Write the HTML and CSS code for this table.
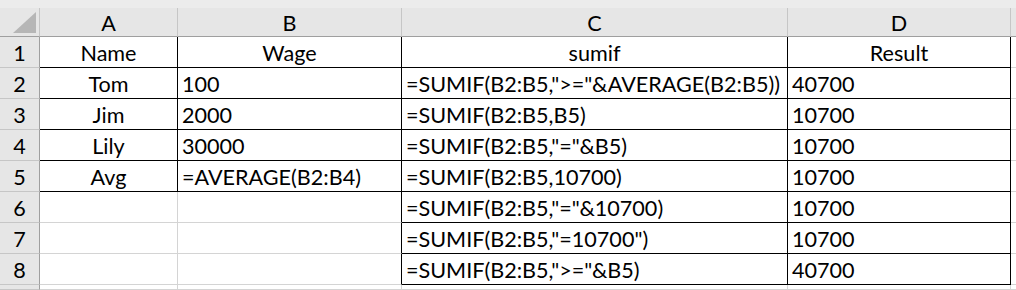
FILE: index.html
```html
<!DOCTYPE html>
<html>
<head>
<meta charset="utf-8">
<link rel="stylesheet" href="styles.css">
</head>
<body>
<div class="topstrip"></div>
<div class="sheet">
  <div class="corner"><span class="tri"></span></div>
  <div class="hd">A</div>
  <div class="hd">B</div>
  <div class="hd">C</div>
  <div class="hd">D</div>
  <div class="hd hd-e"></div>

  <div class="rh">1</div>
  <div class="c bk ctr">Name</div>
  <div class="c bk ctr">Wage</div>
  <div class="c bk ctr">sumif</div>
  <div class="c bk ctr">Result</div>
  <div class="c e"></div>

  <div class="rh">2</div>
  <div class="c bk ctr">Tom</div>
  <div class="c bk">100</div>
  <div class="c bk">=SUMIF(B2:B5,"&gt;="&amp;AVERAGE(B2:B5))</div>
  <div class="c bk">40700</div>
  <div class="c e"></div>

  <div class="rh">3</div>
  <div class="c bk ctr">Jim</div>
  <div class="c bk">2000</div>
  <div class="c bk">=SUMIF(B2:B5,B5)</div>
  <div class="c bk">10700</div>
  <div class="c e"></div>

  <div class="rh">4</div>
  <div class="c bk ctr">Lily</div>
  <div class="c bk">30000</div>
  <div class="c bk">=SUMIF(B2:B5,"="&amp;B5)</div>
  <div class="c bk">10700</div>
  <div class="c e"></div>

  <div class="rh">5</div>
  <div class="c bk ctr">Avg</div>
  <div class="c bk">=AVERAGE(B2:B4)</div>
  <div class="c bk">=SUMIF(B2:B5,10700)</div>
  <div class="c bk">10700</div>
  <div class="c e"></div>

  <div class="rh">6</div>
  <div class="c"></div>
  <div class="c bk-r"></div>
  <div class="c bk">=SUMIF(B2:B5,"="&amp;10700)</div>
  <div class="c bk">10700</div>
  <div class="c e"></div>

  <div class="rh">7</div>
  <div class="c"></div>
  <div class="c bk-r"></div>
  <div class="c bk">=SUMIF(B2:B5,"=10700")</div>
  <div class="c bk">10700</div>
  <div class="c e"></div>

  <div class="rh">8</div>
  <div class="c"></div>
  <div class="c bk-r"></div>
  <div class="c bk">=SUMIF(B2:B5,"&gt;="&amp;B5)</div>
  <div class="c bk">40700</div>
  <div class="c e"></div>

  <div class="rh"></div>
  <div class="c"></div>
  <div class="c"></div>
  <div class="c"></div>
  <div class="c"></div>
  <div class="c e"></div>
</div>
</body>
</html>
```

FILE: styles.css
```css
html, body {
  margin: 0;
  padding: 0;
  background: #ffffff;
  overflow: hidden;
}

body {
  width: 1016px;
  height: 290px;
  font-family: Lato, "Liberation Sans", sans-serif;
  font-size: 21.6px;
  color: #000000;
}

.topstrip {
  height: 8px;
  background: #ececec;
}

.sheet {
  display: grid;
  grid-template-columns: 40px 138px 224px 386px 223px 5px;
  grid-template-rows: 29px repeat(8, 31px) 5px;
}

.corner {
  background: #e6e6e6;
  border-right: 1px solid #c6c6c6;
  border-bottom: 1px solid #9f9f9f;
  position: relative;
}

.tri {
  position: absolute;
  left: 13px;
  top: 4px;
  width: 0;
  height: 0;
  border-left: 23px solid transparent;
  border-bottom: 21px solid #b6b6b6;
}

.hd {
  background: #e6e6e6;
  border-right: 1px solid #c6c6c6;
  border-bottom: 1px solid #9f9f9f;
  display: flex;
  align-items: center;
  justify-content: center;
  padding-top: 2px;
}

.hd-e {
  border-right: none;
}

.rh {
  background: #e6e6e6;
  border-right: 1px solid #9f9f9f;
  border-bottom: 1px solid #c6c6c6;
  display: flex;
  align-items: center;
  justify-content: center;
  padding-top: 2px;
}

.c {
  border-right: 1px solid #d4d4d4;
  border-bottom: 1px solid #d4d4d4;
  display: flex;
  align-items: center;
  padding: 2px 0 0 4px;
  white-space: nowrap;
  overflow: hidden;
}

.c.ctr {
  justify-content: center;
  padding-left: 0;
}

.c.bk {
  border-right-color: #000000;
  border-bottom-color: #000000;
}

.c.bk-r {
  border-right-color: #000000;
}

.c.e {
  border-right: none;
}
```
